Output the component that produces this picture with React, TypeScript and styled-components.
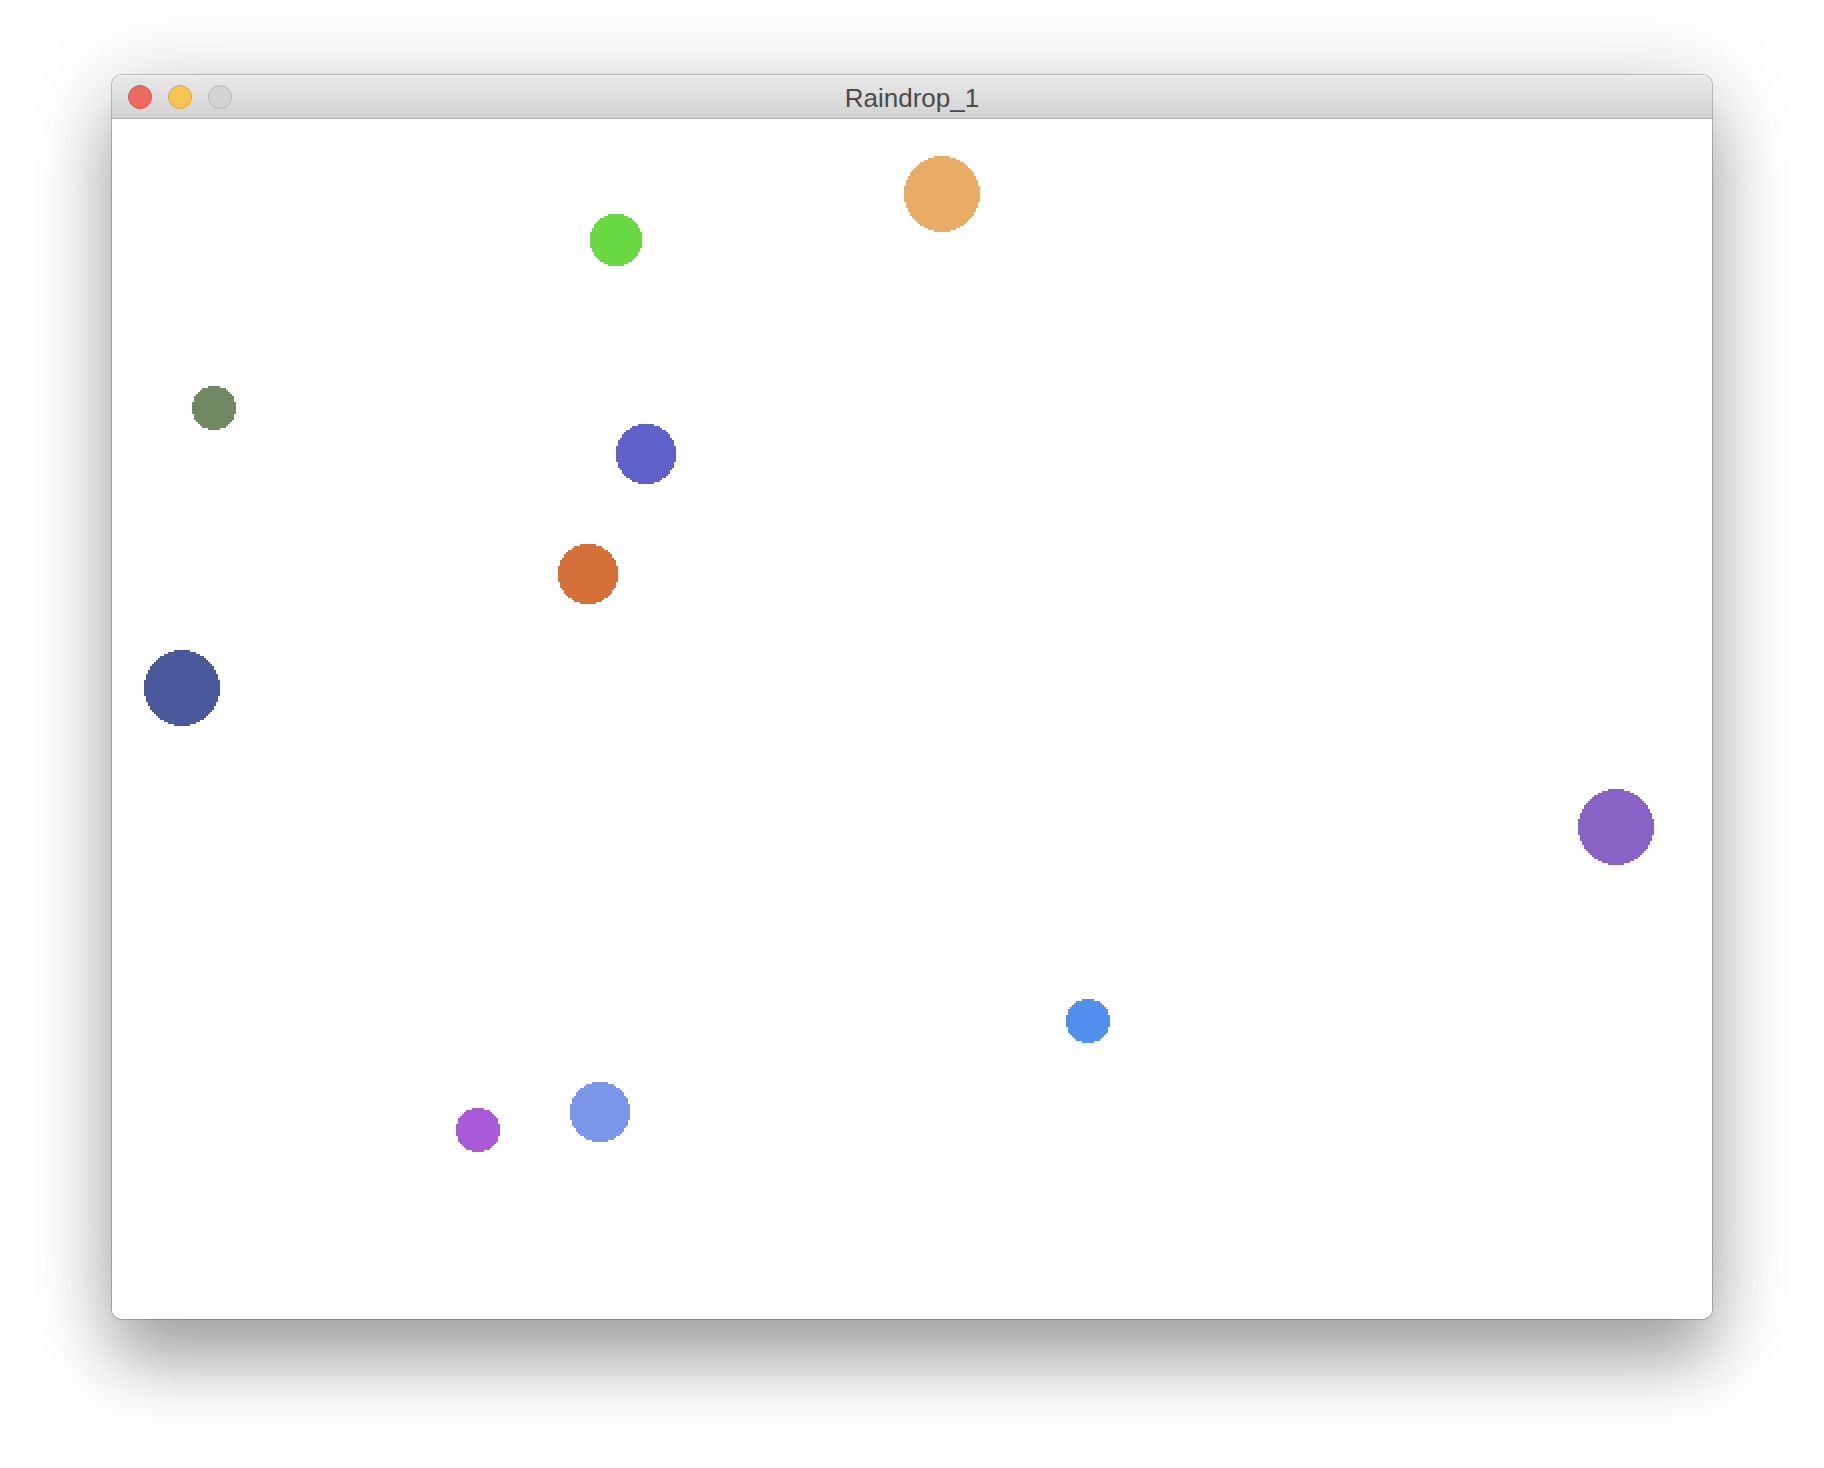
import React from "react";
import styled, { createGlobalStyle } from "styled-components";

const Global = createGlobalStyle`
  html, body { margin: 0; padding: 0; background: #ffffff; }
  body { font-family: "Liberation Sans", Arial, sans-serif; }
`;

const Page = styled.div`
  width: 1824px;
  height: 1468px;
  box-sizing: border-box;
  padding: 75px 0 0 112px;
  background: #ffffff;
  overflow: hidden;
`;

const Window = styled.div`
  width: 1600px;
  display: flex;
  flex-direction: column;
  border-radius: 10px;
  overflow: hidden;
  background: #ffffff;
  box-shadow:
    0 0 0 1px rgba(0, 0, 0, 0.22),
    0 44px 70px rgba(0, 0, 0, 0.32),
    0 0 90px rgba(0, 0, 0, 0.14);
`;

const TitleBar = styled.div`
  height: 44px;
  box-sizing: border-box;
  display: flex;
  align-items: center;
  position: relative;
  padding: 0 0 0 16px;
  background: linear-gradient(#e9e9e9, #d2d2d2);
  border-top: 1px solid #f4f4f4;
  border-bottom: 1px solid #b1b1b1;
`;

const Lights = styled.div`
  display: flex;
  gap: 16px;
  align-items: center;
  z-index: 1;
`;

const Light = styled.span<{ $fill: string; $edge: string }>`
  width: 24px;
  height: 24px;
  box-sizing: border-box;
  border-radius: 50%;
  background: ${(p) => p.$fill};
  border: 1px solid ${(p) => p.$edge};
`;

const Title = styled.div`
  position: absolute;
  left: 0;
  right: 0;
  top: 0;
  bottom: 0;
  display: flex;
  align-items: center;
  justify-content: center;
  font-family: "Liberation Sans", Arial, sans-serif;
  font-size: 26px;
  color: #4a4a4a;
  padding-top: 3px;
`;

const Canvas = styled.svg`
  display: block;
  width: 1600px;
  height: 1200px;
  background: #ffffff;
`;

type Drop = { x: number; y: number; r: number; c: string };

const drops: Drop[] = [
  { x: 830, y: 75, r: 38, c: "#e8ac66" },
  { x: 504, y: 121, r: 26, c: "#69d944" },
  { x: 102, y: 289, r: 22, c: "#718a62" },
  { x: 534, y: 335, r: 30, c: "#6060cb" },
  { x: 476, y: 455, r: 30, c: "#d6703a" },
  { x: 70, y: 569, r: 38, c: "#4a589c" },
  { x: 1504, y: 708, r: 38, c: "#8962c5" },
  { x: 976, y: 902, r: 22, c: "#5290ee" },
  { x: 488, y: 993, r: 30, c: "#7b96e8" },
  { x: 366, y: 1011, r: 22, c: "#a95ad8" },
];

// pixelated (2px cell) circle path
function pixelCircle(cx: number, cy: number, r: number): string {
  const cells = r / 2;
  let d = "";
  for (let j = -cells; j < cells; j++) {
    const yc = j + 0.5;
    const half = Math.round(Math.sqrt(Math.max(0, cells * cells - yc * yc)));
    if (half <= 0) continue;
    const x0 = cx - half * 2;
    const y0 = cy + j * 2;
    d += `M${x0} ${y0}h${half * 4}v2h${-half * 4}z`;
  }
  return d;
}

export default function App() {
  return (
    <>
      <Global />
      <Page>
        <Window>
          <TitleBar>
            <Lights>
              <Light $fill="#ee6a5f" $edge="#d3564b" />
              <Light $fill="#f6c452" $edge="#d9a645" />
              <Light $fill="#d3d3d3" $edge="#b9b9b9" />
            </Lights>
            <Title>Raindrop_1</Title>
          </TitleBar>
          <Canvas viewBox="0 0 1600 1200" shapeRendering="crispEdges">
            {drops.map((d, i) => (
              <path key={i} d={pixelCircle(d.x, d.y, d.r)} fill={d.c} />
            ))}
          </Canvas>
        </Window>
      </Page>
    </>
  );
}
